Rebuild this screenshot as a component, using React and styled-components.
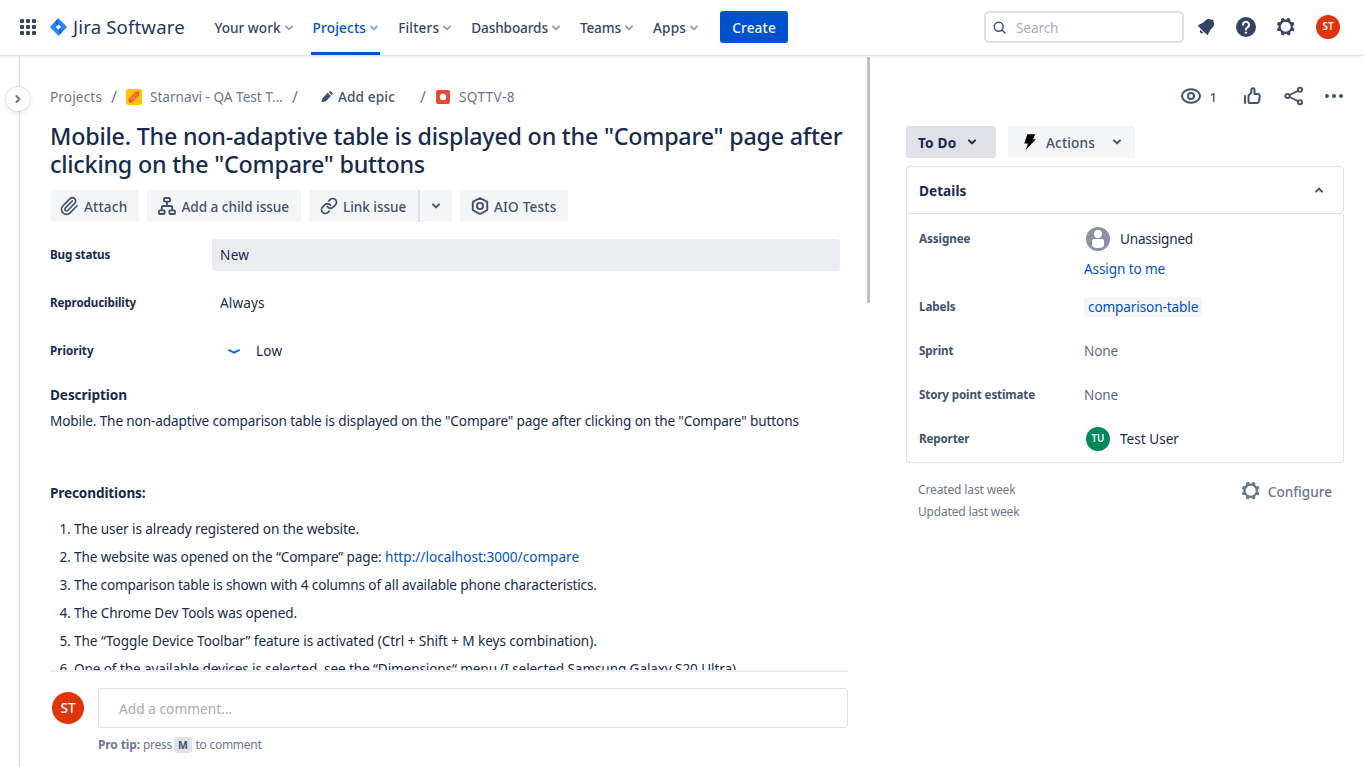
import React from "react";
import styled, { createGlobalStyle, css } from "styled-components";
import { Link, Paperclip } from "lucide-react";

const c = {
  ink: "#172B4D",
  nav: "#344563",
  mid: "#42526E",
  muted: "#6B778C",
  line: "#DFE1E6",
  blue: "#0052CC",
  red: "#DE350B",
};

const GlobalStyle = createGlobalStyle`
  * { box-sizing: border-box; }
  body { margin: 0; background: #fff; color: ${c.ink}; font: 400 13.6px/20px "Noto Sans", "Open Sans", sans-serif; overflow: hidden; }
  svg { display: block; flex: none; }
  button { font: inherit; color: inherit; border: 0; background: none; padding: 0; }
  a { color: ${c.blue}; text-decoration: none; }
`;

const Text = styled.span`
  white-space: nowrap;
  letter-spacing: ${(p) => p.$ls || 0}px;
`;

/* ---------- page frame ---------- */
const Page = styled.div`
  display: flex;
  flex-direction: column;
  width: 1364px;
  height: 767px;
`;
const Header = styled.header`
  position: relative;
  z-index: 2;
  display: flex;
  align-items: stretch;
  height: 55px;
  flex: none;
  padding: 0 24px 0 20px;
  background: #fff;
  box-shadow: 0 1px 0 #dfe1e6, 0 2px 3px rgba(9, 30, 66, 0.09);
`;
const HeaderGroup = styled.div`
  display: flex;
  align-items: center;
  height: 54px;
`;
const Brand = styled(HeaderGroup)`
  gap: 6px;
  margin-left: 14px;
  margin-right: 29.5px;
`;
const BrandName = styled(Text)`
  width: 112px;
  font-size: 18.6px;
  line-height: 26px;
  color: #253858;
`;
const Nav = styled.nav`
  display: flex;
  gap: 20px;
  margin-right: 22px;
`;
const NavItem = styled.a`
  position: relative;
  display: flex;
  align-items: center;
  gap: 4px;
  padding-top: 1px;
  font-weight: 500;
  color: ${(p) => (p.$active ? c.blue : c.nav)};
  & > svg { opacity: 0.5; }
  ${(p) =>
    p.$active &&
    css`
      &::after {
        content: "";
        position: absolute;
        left: -2px;
        right: -2px;
        bottom: 0;
        height: 3px;
        background: ${c.blue};
      }
    `}
`;
const CreateButton = styled.button`
  width: 68px;
  height: 32px;
  margin-top: 11px;
  padding-top: 1px;
  border-radius: 3px;
  background: ${c.blue};
  color: #f4f5f7;
  font-weight: 500;
`;
const HeaderTools = styled(HeaderGroup)`
  margin-left: auto;
  color: ${c.nav};
`;
const SearchBox = styled.div`
  display: flex;
  align-items: center;
  gap: 10px;
  width: 200px;
  height: 32px;
  margin-right: 10px;
  padding-left: 7px;
  border: 2px solid ${c.line};
  border-radius: 5px;
  color: ${c.mid};
  & > span { color: #a5adba; padding-top: 1px; }
`;
const ToolIcon = styled.span`
  display: grid;
  place-items: center;
  width: 24px;
  height: 24px;
  margin-right: ${(p) => p.$gap ?? 16}px;
`;
const Avatar = styled.span`
  display: grid;
  place-items: center;
  flex: none;
  width: ${(p) => p.$size || 24}px;
  height: ${(p) => p.$size || 24}px;
  border-radius: 50%;
  background: ${(p) => p.$bg || c.red};
  color: #fff;
  font-size: ${(p) => p.$font || 9.8}px;
  font-weight: ${(p) => (p.$size ? 500 : 600)};
  line-height: 1;
`;

const Body = styled.div`
  display: flex;
  flex: 1;
  min-height: 0;
`;
const Rail = styled.aside`
  position: relative;
  width: 20px;
  border-right: 1px solid ${c.line};
  box-shadow: inset -1px 0 0 #f2f3f5;
`;
const RailToggle = styled.button`
  position: absolute;
  z-index: 1;
  left: 6px;
  top: 32px;
  display: grid;
  place-items: center;
  width: 24px;
  height: 24px;
  border-radius: 50%;
  background: #fff;
  color: ${c.muted};
  box-shadow: 0 0 0 1px rgba(9, 30, 66, 0.08), 0 2px 4px 1px rgba(9, 30, 66, 0.08);
`;

/* ---------- issue column ---------- */
const Issue = styled.main`
  display: flex;
  flex-direction: column;
  width: 850px;
  padding-left: 30px;
`;
const ScrollArea = styled.div`
  display: flex;
  flex: none;
  height: 615px;
  overflow: hidden;
`;
const Content = styled.div`
  width: 798px;
  padding-top: 30px;
`;
const ScrollThumb = styled.div`
  width: 3px;
  height: 246px;
  margin: 2px 0 0 19px;
  border-radius: 1px;
  background: #c1c1c1;
`;
const Crumbs = styled.div`
  display: flex;
  align-items: center;
  height: 24px;
  color: ${c.muted};
`;
const Crumb = styled(Text)`
  width: ${(p) => p.$w}px;
  margin-right: ${(p) => p.$gap || 0}px;
`;
const Slash = styled.span`
  width: 7px;
  margin-right: ${(p) => p.$gap}px;
  font-size: 16px;
`;
const CrumbIcon = styled.span`
  margin-right: ${(p) => p.$gap}px;
  color: ${c.mid};
`;
const AddEpic = styled(Crumb)`
  font-weight: 500;
  color: ${c.mid};
`;
const Title = styled.h1`
  margin: 13px 0 0;
  font-size: 23.3px;
  font-weight: 500;
  line-height: 28px;
  letter-spacing: -0.22px;
`;
const ActionBar = styled.div`
  display: flex;
  gap: 8px;
  margin-top: 12px;
`;
const ActionButton = styled.button`
  display: flex;
  align-items: center;
  gap: ${(p) => p.$gap ?? 6}px;
  width: ${(p) => p.$w}px;
  height: 32px;
  padding: 1px 0 0 ${(p) => p.$pl ?? 10}px;
  border-radius: ${(p) => p.$radius || "3px"};
  background: ${(p) => p.$bg || "#F4F5F7"};
  color: ${(p) => p.$color || c.mid};
  font-weight: ${(p) => p.$weight || 500};
  & > svg { margin-top: -1px; }
`;
const Split = styled.div`
  display: flex;
  gap: 2px;
  background: ${c.line};
  border-radius: 3px;
`;
const Fields = styled.div`
  display: grid;
  gap: 16px;
  margin-top: 17px;
`;
const Field = styled.div`
  display: grid;
  grid-template-columns: 162px 628px;
  align-items: center;
  height: 32px;
`;
const FieldName = styled(Text)`
  font-size: 11.65px;
  font-weight: 700;
  color: ${(p) => p.$color || c.ink};
`;
const FieldValue = styled.div`
  display: flex;
  align-items: center;
  gap: 15px;
  height: 32px;
  padding-left: 8px;
  border-radius: 3px;
  background: ${(p) => (p.$filled ? "#EBECF0" : "transparent")};
  & > svg { margin-left: 7px; }
`;
const Heading = styled.h2`
  margin: ${(p) => p.$top}px 0 0;
  font-size: 13.6px;
  font-weight: 700;
  line-height: 20px;
`;
const Paragraph = styled.p`
  margin: 4px 0 0;
  line-height: 24px;
`;
const Steps = styled.ol`
  list-style: none;
  margin: 12px 0 0;
  padding: 0;
`;
const Step = styled.li`
  display: grid;
  grid-template-columns: 24px auto;
  line-height: 28px;
  white-space: nowrap;
  & > span:first-child { padding-right: 3.5px; text-align: right; letter-spacing: -0.2px; }
`;
const Composer = styled.section`
  display: grid;
  grid-template-columns: 48px 750px;
  width: 798px;
  border-top: 2px solid #ebecf0;
  padding-top: 16px;
  & > ${Avatar} { margin: 4px 0 0 2px; }
`;
const CommentInput = styled.div`
  height: 40px;
  padding: 10px 20px;
  border: 1px solid ${c.line};
  border-radius: 3px;
  color: #a5adba;
`;
const Tip = styled.div`
  grid-column: 2;
  display: flex;
  align-items: center;
  height: 16px;
  margin-top: 9px;
  font-size: 12px;
  line-height: 16px;
  color: ${c.muted};
  & > b { margin-right: 3px; letter-spacing: -0.12px; }
`;
const Key = styled.kbd`
  width: 18px;
  height: 16px;
  margin: 0 3.5px 0 2px;
  border-radius: 3px;
  background: ${c.line};
  color: ${c.mid};
  font: 700 10.5px/16px "Noto Sans", sans-serif;
  text-align: center;
`;

/* ---------- side column ---------- */
const Side = styled.aside`
  width: 438px;
  margin-left: 36px;
  padding-top: 29px;
`;
const SideTools = styled.div`
  display: flex;
  justify-content: flex-end;
  align-items: center;
  height: 24px;
  margin-right: -2px;
  color: ${c.mid};
`;
const SideTool = styled.span`
  display: grid;
  place-items: center;
  width: 24px;
  height: 24px;
  margin-left: ${(p) => p.$gap}px;
`;
const WatchCount = styled.span`
  width: 8px;
  margin: 1px 0 0 6.5px;
  font-weight: 500;
  font-size: 13px;
`;
const StatusBar = styled.div`
  display: flex;
  gap: 12px;
  margin-top: 18px;
`;
const Panel = styled.section`
  margin-top: 8px;
`;
const PanelHead = styled.div`
  display: flex;
  align-items: center;
  justify-content: space-between;
  height: 48px;
  padding: 0 12px;
  border: 1px solid ${c.line};
  border-radius: 4px 4px 4px 0;
  font-weight: 700;
  & > span { padding-top: 1px; }
  & > svg { color: ${c.mid}; margin-right: 8px; }
`;
const PanelBody = styled.div`
  display: flex;
  flex-direction: column;
  height: 249px;
  padding: 9px 12px 0;
  border: 1px solid ${c.line};
  border-top: 0;
  border-radius: 0 0 4px 4px;
`;
const Detail = styled.div`
  display: grid;
  grid-template-columns: 165px auto;
  align-items: ${(p) => (p.$top ? "start" : "center")};
  height: ${(p) => p.$h || 44}px;
  & > ${FieldName} { line-height: ${(p) => (p.$top ? 32 : 20)}px; }
`;
const DetailValue = styled.div`
  display: flex;
  align-items: center;
  gap: 10px;
  height: 32px;
  padding-left: ${(p) => (p.$person ? 2 : 0)}px;
  color: ${(p) => (p.$empty ? "#5E6C84" : c.ink)};
`;
const AssignLink = styled.a`
  display: block;
  line-height: 28px;
`;
const Tag = styled.a`
  width: 118px;
  height: 20px;
  padding-left: 4px;
  margin-bottom: 1px;
  line-height: 19px;
  border-radius: 3px;
  background: #f4f5f7;
`;
const Spacer = styled.div`
  height: 6px;
`;
const PanelFoot = styled.footer`
  display: flex;
  justify-content: space-between;
  padding: 16px 12px 0;
  font-size: 12px;
  line-height: 22px;
  color: ${c.muted};
`;
const Stamps = styled.div`
  display: grid;
`;
const Configure = styled.button`
  display: flex;
  align-items: center;
  gap: 5px;
  height: 24px;
  font-size: 13.6px;
  font-weight: 500;
  color: ${c.muted};
  & > span { padding-top: 2px; }
`;

/* ---------- icons ---------- */
const Chevron = ({ turn = 0, size = 8 }) => (
  <svg width={size} height={size} viewBox="8 8.6 8 8" fill="currentColor">
    <path
      transform={`rotate(${turn} 12 12.6)`}
      d="M8.292 10.293a1.009 1.009 0 000 1.419l2.939 2.965c.218.215.5.322.779.322s.556-.107.769-.322l2.93-2.955a1.01 1.01 0 000-1.419.987.987 0 00-1.406 0l-2.298 2.317-2.307-2.327a.99.99 0 00-1.406 0z"
    />
  </svg>
);
const GridIcon = () => (
  <svg width="16" height="16" viewBox="0 0 16 16" fill={c.nav}>
    {[0, 6, 12].map((y) => [0, 6, 12].map((x) => <rect key={`${x}-${y}`} x={x} y={y} width="4" height="4" rx="1" />))}
  </svg>
);
const JiraMark = () => (
  <svg width="17" height="18" viewBox="0 0 17 18">
    <defs>
      <linearGradient id="foldA" x1="8.5" y1="4" x2="4" y2="9" gradientUnits="userSpaceOnUse">
        <stop offset="0.1" stopColor="#0052CC" />
        <stop offset="1" stopColor="#2684FF" />
      </linearGradient>
      <linearGradient id="foldB" x1="8.5" y1="14" x2="13" y2="9" gradientUnits="userSpaceOnUse">
        <stop offset="0.1" stopColor="#0052CC" />
        <stop offset="1" stopColor="#2684FF" />
      </linearGradient>
    </defs>
    <path fillRule="evenodd" fill="#2684FF" d="M8.5 0.2 16.7 8.4q.5.6 0 1.2L8.5 17.8.3 9.6q-.5-.6 0-1.2zM8.5 6.3 5.8 9l2.7 2.7L11.2 9z" />
    <path fill="url(#foldA)" d="M8.5 6.3C6.8 4.6 6.800 2 8.500.2L5.200 3.500 6.800 7.900z" />
    <path fill="url(#foldB)" d="M8.500 11.700C10.200 13.400 10.200 16 8.500 17.800L11.800 14.500 10.200 10.100z" />
  </svg>
);
const SearchIcon = () => (
  <svg width="13" height="13" viewBox="0 0 13 13" fill="none" stroke="currentColor" strokeWidth="1.400" strokeLinecap="round">
    <circle cx="5.700" cy="5.700" r="4.500" />
    <path d="M9 9 12 12" />
  </svg>
);
const BellIcon = () => (
  <svg width="24" height="24" viewBox="0 0 24 24" fill="currentColor">
    <path d="M6.485 17.669a2 2 0 002.829 0l-2.829-2.83a2 2 0 000 2.830zm4.897-12.191l-.725.725c-.782.782-2.210 1.813-3.206 2.311l-3.017 1.509c-.495.248-.584.774-.187 1.171l8.556 8.556c.398.396.922.313 1.171-.188l1.510-3.016c.494-.988 1.526-2.420 2.311-3.206l.725-.726a5.048 5.048 0 00.640-6.356 1.010 1.010 0 10-1.354-1.494c-.023.025-.046.049-.066.075a5.043 5.043 0 00-2.788-.840 5.036 5.036 0 00-3.570 1.479z" />
  </svg>
);
const HelpIcon = () => (
  <svg width="24" height="24" viewBox="0 0 24 24">
    <circle cx="12" cy="12" r="10" fill="currentColor" />
    <path d="M9 9.800a3 3 0 1 1 4.600 2.500c-.900.600-1.600 1-1.600 2.200" fill="none" stroke="#fff" strokeWidth="2" strokeLinecap="round" />
    <circle cx="12" cy="17.600" r="1.200" fill="#fff" />
  </svg>
);
const GearIcon = () => (
  <svg width="24" height="24" viewBox="0 0 24 24" fill="currentColor" fillRule="evenodd">
    <path d="M11.701 16.7a5.002 5.002 0 1 1 0-10.003 5.002 5.002 0 0 1 0 10.004m8.368-3.117a1.995 1.995 0 0 1-1.346-1.885c0-.876.563-1.613 1.345-1.885a.48.48 0 0 0 .315-.574 8.947 8.947 0 0 0-.836-1.993.477.477 0 0 0-.598-.195 2.04 2.04 0 0 1-1.29.08 1.988 1.988 0 0 1-1.404-1.395 2.04 2.04 0 0 1 .076-1.297.478.478 0 0 0-.196-.597 8.98 8.98 0 0 0-1.975-.826.479.479 0 0 0-.574.314 1.995 1.995 0 0 1-1.885 1.346 1.994 1.994 0 0 1-1.884-1.345.482.482 0 0 0-.575-.315c-.708.2-1.379.485-2.004.842a.47.47 0 0 0-.198.582A2.002 2.002 0 0 1 4.445 7.06a.478.478 0 0 0-.595.196 8.946 8.946 0 0 0-.833 1.994.48.48 0 0 0 .308.572 1.995 1.995 0 0 1 1.323 1.877c0 .867-.552 1.599-1.324 1.877a.479.479 0 0 0-.308.57 8.99 8.99 0 0 0 .723 1.79.477.477 0 0 0 .624.194c.595-.273 1.343-.264 2.104.238.117.077.225.185.302.3.527.8.512 1.58.198 2.188a.473.473 0 0 0 .168.628 8.946 8.946 0 0 0 2.11.897.474.474 0 0 0 .57-.313 1.995 1.995 0 0 1 1.886-1.353c.878 0 1.618.567 1.887 1.353a.475.475 0 0 0 .57.313 8.964 8.964 0 0 0 2.084-.883.473.473 0 0 0 .167-.631c-.318-.608-.337-1.393.191-2.195.077-.116.185-.225.302-.302.772-.511 1.527-.513 2.125-.23a.477.477 0 0 0 .628-.19 8.925 8.925 0 0 0 .728-1.793.478.478 0 0 0-.314-.573" />
  </svg>
);
const ProjectIcon = () => (
  <svg width="16" height="16" viewBox="0 0 16 16">
    <rect width="16" height="16" rx="2.500" fill="#FFC400" />
    <path d="M5 11 11 5" stroke="#FF7452" strokeWidth="5.400" strokeLinecap="round" />
    <path d="M3.800 12.200 12.200 3.800" stroke="#E5541B" strokeWidth="2.400" strokeLinecap="round" />
    <path d="M4.600 11.400 6 9.400 7.400 9 8.400 7 10 6.400 11.400 4.600" fill="none" stroke="#FFC400" strokeWidth="0.800" />
  </svg>
);
const PencilIcon = () => (
  <svg width="12" height="12" viewBox="0 0 12 12" fill="currentColor">
    <path d="M1.600 7 6.800 1.800 10 5 4.800 10.200.900 11.300q-.500.100-.400-.400zM7.700 1 8.300.500q1-.800 1.900 0l1.200 1.200q.800.900 0 1.900L10.900 4.200z" />
  </svg>
);
const BugIcon = () => (
  <svg width="14" height="14" viewBox="0 0 14 14">
    <rect width="14" height="14" rx="2" fill="#E5493A" />
    <circle cx="7" cy="7" r="3.200" fill="#fff" />
  </svg>
);
const ChildIcon = () => (
  <svg width="18" height="18" viewBox="0 0 18 18" fill="none" stroke="currentColor" strokeWidth="1.900">
    <rect x="6" y="1" width="6" height="3.600" rx="1" />
    <rect x="1" y="13.400" width="5.600" height="3.600" rx="1" />
    <rect x="11.400" y="13.400" width="5.600" height="3.600" rx="1" />
    <path d="M9 4.600V9M3.800 13.400V9.900q0-.900.900-.900h8.600q.900 0 .900.900v3.500" />
  </svg>
);
const AioIcon = () => (
  <svg width="18" height="18" viewBox="0 0 18 18" fill="none" stroke="currentColor" strokeWidth="1.900" strokeLinejoin="round">
    <path d="M9 1 16.200 4.900V13.100L9 17 1.800 13.100V4.900z" />
    <circle cx="9" cy="9" r="3.100" />
  </svg>
);
const LowIcon = () => (
  <svg width="14" height="8" viewBox="0 0 14 8" fill="none" stroke="#0065FF" strokeWidth="2" strokeLinecap="round" strokeLinejoin="round">
    <path d="M2 3.200 7 5.600 12 3.200" />
  </svg>
);
const EyeIcon = () => (
  <svg width="24" height="24" viewBox="0 0 24 24" fill="none" stroke="currentColor" strokeWidth="2">
    <path d="M3 12C3 8.200 7 5.200 12 5.200S21 8.200 21 12 17 18.800 12 18.800 3 15.800 3 12z" />
    <circle cx="12" cy="12" r="3" />
  </svg>
);
const ThumbIcon = () => (
  <svg width="24" height="24" viewBox="0 0 24 24" fill="none" stroke="currentColor" strokeWidth="2" strokeLinejoin="round" strokeLinecap="round">
    <path d="M5 12V19" />
    <path d="M8.500 11.500 11.300 8.600V6.200c0-2.600 3.200-2.400 3.200.100V10h3.300c1.300 0 2.200 1 2 2.200l-.800 5.200c-.200 1-.900 1.600-1.900 1.600H9.500q-1 0-1-1z" />
  </svg>
);
const ShareIcon = () => (
  <svg width="24" height="24" viewBox="0 0 24 24" fill="none" stroke="currentColor" strokeWidth="1.900">
    <circle cx="5.500" cy="12" r="2.100" />
    <circle cx="18" cy="5.800" r="2.100" />
    <circle cx="18" cy="18.200" r="2.100" />
    <path d="M7.400 11 16.100 6.800M7.400 13 16.100 17.200" />
  </svg>
);
const MoreIcon = () => (
  <svg width="24" height="24" viewBox="0 0 24 24" fill="currentColor">
    <circle cx="5" cy="12" r="2" />
    <circle cx="12" cy="12" r="2" />
    <circle cx="19" cy="12" r="2" />
  </svg>
);
const BoltIcon = () => (
  <svg width="14" height="16" viewBox="0 0 14 16" fill="#000">
    <path d="M4.300.3H12.300L10 5.200H12.900L2.800 15.800 5 9.400H1.300z" />
  </svg>
);
const PersonIcon = () => (
  <svg width="24" height="24" viewBox="0 0 24 24">
    <circle cx="12" cy="12" r="12" fill="#8993A4" />
    <circle cx="12" cy="7" r="4" fill="#fff" />
    <path d="M6 14q0-2 2-2h8q2 0 2 2v3.800q0 3.200-6 3.200t-6-3.200z" fill="#fff" />
    <path d="M8 11.500h8" stroke="#8993A4" strokeWidth="1" />
  </svg>
);

/* ---------- content ---------- */
const navItems = [
  ["Your work", 0],
  ["Projects", 0.2],
  ["Filters", 0.17],
  ["Dashboards", -0.12],
  ["Teams", -0.13],
  ["Apps", 0.17],
];
const steps = [
  ["The user is already registered on the website.", -0.1],
  ["The website was opened on the “Compare” page: ", -0.11, "http://localhost:3000/compare", 0],
  ["The comparison table is shown with 4 columns of all available phone characteristics.", -0.152],
  ["The Chrome Dev Tools was opened.", -0.116],
  ["The “Toggle Device Toolbar” feature is activated (Ctrl + Shift + M keys combination).", -0.05],
  ["One of the available devices is selected, see the “Dimensions“ menu (I selected Samsung Galaxy S20 Ultra)", -0.116],
];

function TopBar() {
  return (
    <Header>
      <HeaderGroup><GridIcon /></HeaderGroup>
      <Brand><JiraMark /><BrandName $ls={0.15}>Jira Software</BrandName></Brand>
      <Nav>
        {navItems.map(([label, ls]) => (
          <NavItem key={label} $active={label === "Projects"}>
            <Text $ls={ls}>{label}</Text>
            <Chevron />
          </NavItem>
        ))}
      </Nav>
      <CreateButton><Text $ls={0.18}>Create</Text></CreateButton>
      <HeaderTools>
        <SearchBox><SearchIcon /><Text $ls={-0.1}>Search</Text></SearchBox>
        <ToolIcon><BellIcon /></ToolIcon>
        <ToolIcon><HelpIcon /></ToolIcon>
        <ToolIcon $gap={18}><GearIcon /></ToolIcon>
        <Avatar>ST</Avatar>
      </HeaderTools>
    </Header>
  );
}

function IssueView() {
  return (
    <Issue>
      <ScrollArea>
        <Content>
          <Crumbs>
            <Crumb $w={52} $gap={9} $ls={0.14}>Projects</Crumb>
            <Slash $gap={8}>/</Slash>
            <CrumbIcon $gap={8}><ProjectIcon /></CrumbIcon>
            <Crumb $w={133} $gap={9}>Starnavi - QA Test T...</Crumb>
            <Slash $gap={22}>/</Slash>
            <CrumbIcon $gap={5}><PencilIcon /></CrumbIcon>
            <AddEpic $w={57} $gap={25} $ls={0.14}>Add epic</AddEpic>
            <Slash $gap={9}>/</Slash>
            <CrumbIcon $gap={9}><BugIcon /></CrumbIcon>
            <Crumb $w={56} $ls={0.37}>SQTTV-8</Crumb>
          </Crumbs>
          <Title>
            Mobile. The non-adaptive table is displayed on the "Compare" page after
            <br />
            clicking on the "Compare" buttons
          </Title>
          <ActionBar>
            <ActionButton $w={89} $pl={9} $gap={5}><Paperclip size={20} strokeWidth={2} /><Text $ls={0.18}>Attach</Text></ActionButton>
            <ActionButton $w={154} $pl={11} $gap={5.5}><ChildIcon /><Text $ls={-0.05}>Add a child issue</Text></ActionButton>
            <Split>
              <ActionButton $w={109} $pl={11} $gap={5} $radius="3px 0 0 3px"><Link size={18} strokeWidth={2.4} /><Text $ls={-0.05}>Link issue</Text></ActionButton>
              <ActionButton $w={32} $pl={12} $radius="0 3px 3px 0"><Chevron /></ActionButton>
            </Split>
            <ActionButton $w={108} $pl={11} $gap={5}><AioIcon /><Text $ls={0.18}>AIO Tests</Text></ActionButton>
          </ActionBar>
          <Fields>
            <Field><FieldName $ls={-0.2}>Bug status</FieldName><FieldValue $filled><Text $ls={0.3}>New</Text></FieldValue></Field>
            <Field><FieldName $ls={-0.13}>Reproducibility</FieldName><FieldValue><Text $ls={0.1}>Always</Text></FieldValue></Field>
            <Field><FieldName>Priority</FieldName><FieldValue><LowIcon /><Text $ls={0.25}>Low</Text></FieldValue></Field>
          </Fields>
          <Heading $top={18}><Text $ls={-0.09}>Description</Text></Heading>
          <Paragraph>
            <Text $ls={-0.134}>
              Mobile. The non-adaptive comparison table is displayed on the "Compare" page after clicking on the "Compare" buttons
            </Text>
          </Paragraph>
          <Heading $top={50}><Text $ls={-0.13}>Preconditions:</Text></Heading>
          <Steps>
            {steps.map(([label, ls, href, linkLs]) => (
              <Step key={label}>
                <span>{steps.findIndex((s) => s[0] === label) + 1}.</span>
                <Text $ls={ls}>{label}{href && <Text as="a" href={href} $ls={linkLs}>{href}</Text>}</Text>
              </Step>
            ))}
          </Steps>
        </Content>
        <ScrollThumb />
      </ScrollArea>
      <Composer>
        <Avatar $size={32} $font={13.6}>ST</Avatar>
        <CommentInput><Text $ls={0.07}>Add a comment…</Text></CommentInput>
        <Tip><b>Pro tip:</b><Text $ls={-0.27}>press</Text><Key>M</Key><Text $ls={-0.27}>to comment</Text></Tip>
      </Composer>
    </Issue>
  );
}

function DetailsPanel() {
  return (
    <Side>
      <SideTools>
        <SideTool><EyeIcon /></SideTool>
        <WatchCount>1</WatchCount>
        <SideTool $gap={22.5}><ThumbIcon /></SideTool>
        <SideTool $gap={18}><ShareIcon /></SideTool>
        <SideTool $gap={16}><MoreIcon /></SideTool>
      </SideTools>
      <StatusBar>
        <ActionButton $w={90} $pl={12} $gap={12} $bg={c.line} $color={c.ink} $weight={700}><Text $ls={0.2}>To Do</Text><Chevron /></ActionButton>
        <ActionButton $w={127} $pl={15} $gap={9}><BoltIcon /><Text $ls={0.16}>Actions</Text><ChevronSlot><Chevron /></ChevronSlot></ActionButton>
      </StatusBar>
      <Panel>
        <PanelHead><Text $ls={0.05}>Details</Text><Chevron turn={180} /></PanelHead>
        <PanelBody>
          <Detail $h={68} $top>
            <FieldName $color={c.mid} $ls={-0.08}>Assignee</FieldName>
            <div>
              <DetailValue $person><PersonIcon /><Text $ls={-0.23}>Unassigned</Text></DetailValue>
              <AssignLink><Text $ls={-0.12}>Assign to me</Text></AssignLink>
            </div>
          </Detail>
          <Detail $h={32}><FieldName $color={c.mid} $ls={-0.1}>Labels</FieldName><DetailValue><Tag><Text $ls={-0.12}>comparison-table</Text></Tag></DetailValue></Detail>
          <Spacer />
          <Detail><FieldName $color={c.mid} $ls={-0.11}>Sprint</FieldName><DetailValue $empty><Text $ls={-0.17}>None</Text></DetailValue></Detail>
          <Detail><FieldName $color={c.mid} $ls={-0.15}>Story point estimate</FieldName><DetailValue $empty><Text $ls={-0.17}>None</Text></DetailValue></Detail>
          <Detail><FieldName $color={c.mid} $ls={-0.15}>Reporter</FieldName><DetailValue $person><Avatar $bg="#00875A">TU</Avatar><Text>Test User</Text></DetailValue></Detail>
        </PanelBody>
      </Panel>
      <PanelFoot>
        <Stamps><Text $ls={-0.135}>Created last week</Text><Text $ls={-0.165}>Updated last week</Text></Stamps>
        <Configure><GearIcon /><Text>Configure</Text></Configure>
      </PanelFoot>
    </Side>
  );
}

const ChevronSlot = styled.span`
  margin: -1px 0 0 9px;
`;

export default function App() {
  return (
    <Page>
      <GlobalStyle />
      <TopBar />
      <Body>
        <Rail><RailToggle><Chevron turn={-90} size={8} /></RailToggle></Rail>
        <IssueView />
        <DetailsPanel />
      </Body>
    </Page>
  );
}
